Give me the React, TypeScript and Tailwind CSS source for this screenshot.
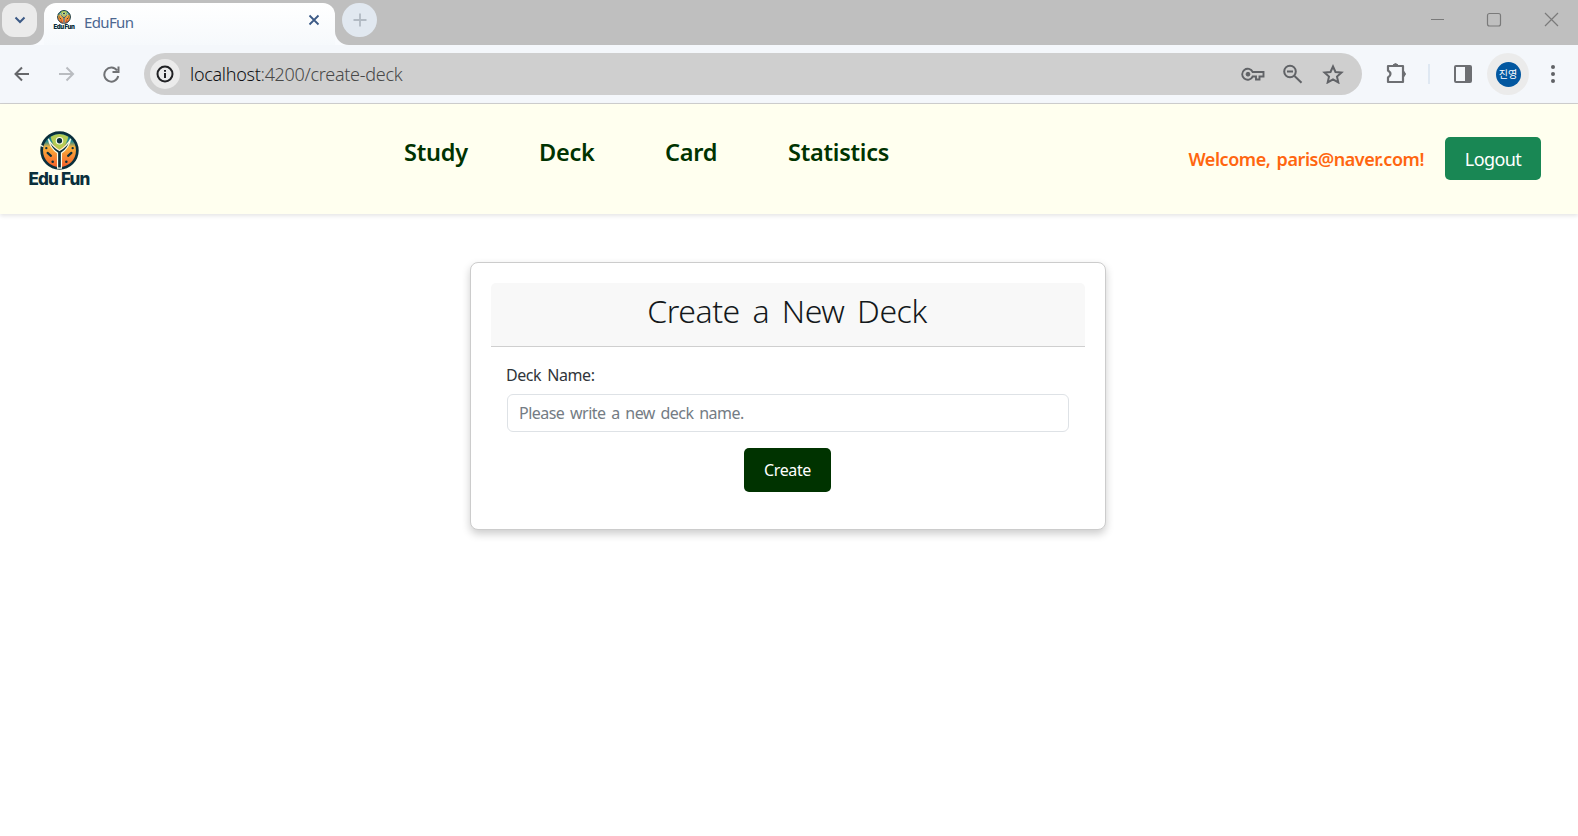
import React from "react";

const ui = "font-['Noto_Sans','Noto_Sans_CJK_KR',sans-serif]";

function Emblem({ className }: { className: string }) {
  return (
    <svg viewBox="0 0 40 40" className={className}>
      <defs>
        <linearGradient id="leaf" x1="0" y1="0" x2="0" y2="1">
          <stop offset="0" stopColor="#12687c" />
          <stop offset="0.25" stopColor="#2b8c8c" />
          <stop offset="0.4" stopColor="#f9b23c" />
          <stop offset="1" stopColor="#f55a28" />
        </linearGradient>
      </defs>
      <circle cx="20" cy="20" r="18.300" fill="url(#leaf)" stroke="#0a2f3c" strokeWidth="2.800" />
      <path d="M11 6Q20 0 29 6Q28 14 20 19Q12 14 11 6Z" fill="#b5cc55" />
      <path d="M8.500 8Q10.500 17.500 18 22.500V38H22V22.500Q29.500 17.500 31.500 8Q27.500 16 20 20Q12.500 16 8.500 8Z" fill="#0a2f3c" stroke="#fdfde8" strokeWidth="1.200" />
      <circle cx="20" cy="10" r="3.900" fill="#fdfde8" />
      <circle cx="20" cy="10" r="2.700" fill="#0a2f3c" />
      <path d="M7.800 22.500L11.200 25.500M28.800 25.500L32.200 22.500" stroke="#0a2f3c" strokeWidth="2.300" strokeLinecap="round" />
      <g fill="#0a2f3c">
        <circle cx="6.500" cy="17.500" r="1.200" /><circle cx="33.500" cy="17.500" r="1.200" />
        <circle cx="13" cy="31.500" r="1.300" /><circle cx="27" cy="31.500" r="1.300" />
      </g>
      <path d="M0 14.500L3.500 16" stroke="#fdfde8" strokeWidth="1.200" />
    </svg>
  );
}

function TabStrip() {
  return (
    <div className="flex h-[45px] bg-[#bfbfbf]">
      <div className="flex w-[44px] shrink-0 bg-[#f9fbfe]">
        <div className="w-full rounded-br-[14px] bg-[#bfbfbf] pl-[2px] pt-[3px]">
          <div className="flex h-[34px] w-[35px] items-center justify-center rounded-[12px] bg-[#ebebeb]">
            <svg viewBox="0 0 12 8" className="h-[8px] w-[12px]"><path d="M1.500 1.500L6 6L10.500 1.500" fill="none" stroke="#3c5a86" strokeWidth="2" /></svg>
          </div>
        </div>
      </div>
      <div className="flex w-[291px] shrink-0 bg-[#bfbfbf]">
        <div className="mt-[3px] flex w-full rounded-t-[12px] bg-gradient-to-b from-white to-[#f6f9fc]">
          <div className="ml-[10px] mt-[7px] flex h-[20px] w-[20px] flex-col items-center bg-white">
            <Emblem className="h-[14px] w-[14px]" />
            <span className="whitespace-nowrap font-['Inter',sans-serif] text-[6px] font-black leading-[6px] tracking-[-0.400px] text-[#0a2f3c]">Edu Fun</span>
          </div>
          <span className="ml-[10px] mt-[8px] text-[15px] font-normal leading-[22px] tracking-[-0.650px] text-[#4c6790]">EduFun</span>
          <svg viewBox="0 0 12 12" className="ml-auto mr-[15px] mt-[11px] h-[12px] w-[12px]"><path d="M1.500 1.500L10.500 10.500M10.500 1.500L1.500 10.500" stroke="#3c5a86" strokeWidth="1.800" /></svg>
        </div>
      </div>
      <div className="flex flex-1 bg-[#f9fbfe]">
        <div className="flex w-full rounded-bl-[14px] bg-[#bfbfbf]">
          <div className="ml-[7px] mt-[3px] flex h-[34px] w-[35px] items-center justify-center rounded-full bg-[#e1e8f0]">
            <svg viewBox="0 0 14 14" className="h-[14px] w-[14px]"><path d="M7 0.500V13.500M0.500 7H13.500" stroke="#b2bac3" strokeWidth="1.800" /></svg>
          </div>
          <svg viewBox="0 0 130 16" className="ml-auto mr-[18px] mt-[12px] h-[16px] w-[130px]" fill="none" stroke="#7a7a7a" strokeWidth="1.200">
            <path d="M1 7.500H14M115 1L128 14M128 1L115 14" />
            <rect x="57.500" y="1.500" width="13" height="12.500" rx="2" />
          </svg>
        </div>
      </div>
    </div>
  );
}

function AddressBar() {
  return (
    <div className="flex h-[59px] items-center border-b border-[#cfcfcf] bg-[#f4f7fb]">
      <svg viewBox="0 0 108 18" className="ml-[13px] h-[18px] w-[108px] shrink-0" fill="none" strokeWidth="2">
        <path d="M16 9H2.500M9 2.500L2.500 9L9 15.500" stroke="#66686b" />
        <path d="M46 9H60M53.500 2.500L60 9L53.500 15.500" stroke="#b9bcc0" />
        <path d="M104 5.500A7 7 0 1 0 105.200 11M105.500 1.500V7H99.500" stroke="#707275" />
      </svg>
      <div className="ml-[23px] flex h-[42px] w-[1218px] shrink-0 items-center rounded-full bg-[#cfcfcf] pl-[6px]">
        <div className="flex h-[30px] w-[30px] items-center justify-center rounded-full bg-[#ebebeb]">
          <svg viewBox="0 0 18 18" className="h-[18px] w-[18px]"><circle cx="9" cy="9" r="7.500" fill="none" stroke="#202124" strokeWidth="2" /><path d="M9 8V13M9 5V6.800" stroke="#202124" strokeWidth="2" /></svg>
        </div>
        <span className="ml-[10px] text-[18px] font-light leading-[24px] tracking-[-0.290px] text-[#484848]"><span className="text-[#101114]">localhost</span>:4200/create-deck</span>
        <svg viewBox="0 0 104 20" className="ml-auto mr-[17px] h-[20px] w-[104px]" fill="none" stroke="#606266" strokeWidth="2">
          <path d="M11.700 8A5.500 5.500 0 1 0 11.700 12.500H15V15.500H18.500V12.500H22.500V8Z" strokeWidth="1.900" />
          <circle cx="7" cy="10.200" r="1.900" fill="#606266" strokeWidth="1" />
          <circle cx="49" cy="7.500" r="5.800" /><path d="M53.500 12L60.500 18.800M46 7.500H52" />
          <path d="M92 2.500L94.500 8L100.500 8.600L96 12.600L97.300 18.400L92 15.300L86.700 18.400L88 12.600L83.500 8.600L89.500 8Z" strokeWidth="2" />
        </svg>
      </div>
      <svg viewBox="0 0 24 24" className="ml-[23px] h-[24px] w-[24px] shrink-0" fill="none" stroke="#6d6f73" strokeWidth="2.200"><path d="M3 4H18V20H3V15.500Q8 12 3 8.500Z" strokeLinejoin="round" /><path d="M8 3Q10.500 0 13 3ZM19 9.500Q22 12 19 14.500Z" fill="#6d6f73" strokeWidth="1" /></svg>
      <div className="ml-[19px] h-[20px] w-[2px] shrink-0 bg-[#dfe8f2]" />
      <svg viewBox="0 0 20 20" className="ml-[23px] h-[20px] w-[20px] shrink-0"><rect x="2" y="2" width="16" height="16" rx="1" fill="none" stroke="#6d6f73" strokeWidth="2" /><path d="M12 2H18V18H12Z" fill="#6d6f73" /></svg>
      <div className="ml-[14px] flex h-[42px] w-[42px] shrink-0 items-center justify-center rounded-full bg-[#ebebeb]">
        <div className="flex h-[25px] w-[25px] items-center justify-center rounded-full bg-[#0257a0] text-[10px] leading-none text-white">진영</div>
      </div>
      <svg viewBox="0 0 4 18" className="ml-[22px] h-[18px] w-[4px] shrink-0" fill="#606266"><circle cx="2" cy="2" r="2" /><circle cx="2" cy="9" r="2" /><circle cx="2" cy="16" r="2" /></svg>
    </div>
  );
}

export default function App() {
  return (
    <div className={`h-[836px] w-[1578px] overflow-hidden bg-white ${ui}`}>
      <TabStrip />
      <AddressBar />
      <header className="flex h-[110px] bg-[#ffffef] shadow-[0_2px_4px_rgba(0,0,0,0.100)]">
        <div className="ml-[28px] mt-[27px] flex w-[62px] shrink-0 flex-col items-center">
          <Emblem className="h-[39px] w-[39px]" />
          <span className="whitespace-nowrap font-['Inter',sans-serif] text-[17px] font-extrabold leading-[18px] tracking-[-0.780px] text-[#0a2f3c]">Edu Fun</span>
        </div>
        <nav className="ml-[314px] mt-[32px] flex h-[33px] text-[23.500px] font-semibold leading-[33px] tracking-[-0.250px] text-[#003300]">
          <a className="w-[135px]">Study</a>
          <a className="w-[126px]">Deck</a>
          <a className="w-[123px]">Card</a>
          <a>Statistics</a>
        </nav>
        <div className="ml-auto mr-[37px] mt-[33px] flex h-[43px] items-center">
          <span className="mr-[21px] mt-[2px] text-[18px] font-semibold tracking-[-0.440px] [word-spacing:2px] text-[#ff6610]">Welcome, paris@naver.com!</span>
          <button className="h-[43px] w-[96px] rounded-[5px] bg-[#198754] pt-[2px] text-[18px] font-normal tracking-[-0.600px] text-white">Logout</button>
        </div>
      </header>
      <main className="ml-[470px] mt-[48px] h-[268px] w-[636px] rounded-[8px] border border-[#ccc] bg-white p-[20px] shadow-[0_4px_8px_rgba(0,0,0,0.200)]">
        <h1 className="flex h-[64px] items-center justify-center rounded-t-[5px] border-b border-[#cfcfcf] bg-[#f8f8f8] pb-[7px] pr-[2px] text-[32px] font-light tracking-[-0.450px] [word-spacing:4.800px] text-[#14181b]">Create a New Deck</h1>
        <div className="flex flex-col px-[16px] pt-[16px]">
          <label className="-ml-px h-[31px] text-[16px] font-normal leading-[24px] tracking-[-0.450px] [word-spacing:2.500px] text-[#30353a]">Deck Name:</label>
          <input className="h-[38px] rounded-[6px] border border-[#dee2e6] pl-[11px] pr-[12px] text-[16px] font-normal tracking-[-0.520px] [word-spacing:2px] placeholder:text-[#747c84]" placeholder="Please write a new deck name." />
          <button className="mr-px mt-[16px] h-[44px] w-[87px] self-center rounded-[5px] bg-[#003300] text-[16px] font-normal tracking-[-0.350px] text-white">Create</button>
        </div>
      </main>
    </div>
  );
}
